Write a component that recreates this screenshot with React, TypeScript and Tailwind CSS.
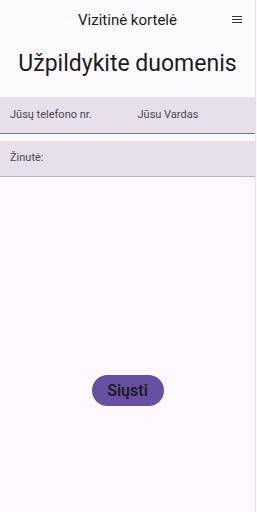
export default function App() {
  return (
    <div className="w-[257px] h-[512px] bg-[#fdf8fd] flex font-['Roboto',sans-serif]">
      <main className="w-[256px] h-full flex flex-col bg-[#fefbff] border-r border-[#e4e0e4]">
        {/* Top bar */}
        <header className="relative h-[40px] flex items-center justify-center">
          <h1 className="text-[15px] text-[#1c1b1f] leading-none">Vizitinė kortelė</h1>
          <button className="absolute right-[13px] top-[16px] flex flex-col gap-[2px]">
            <span className="block w-[10px] h-[1px] bg-[#333]" />
            <span className="block w-[10px] h-[1px] bg-[#333]" />
            <span className="block w-[10px] h-[1px] bg-[#333]" />
          </button>
        </header>

        <h2 className="mt-[10px] text-center text-[23px] text-[#1c1b1f] leading-[28px]">
          Užpildykite duomenis
        </h2>

        {/* Fields */}
        <div className="mt-[19px] flex">
          <div className="flex-1 h-[37px] bg-[#e7e0ec] border-b border-[#79747e] flex items-center pt-[1px] px-[10px] text-[11px] text-[#49454f]">
            Jūsų telefono nr.
          </div>
          <div className="flex-1 h-[37px] bg-[#e7e0ec] border-b border-[#79747e] flex items-center pt-[1px] px-[12px] text-[11px] text-[#49454f]">
            Jūsu Vardas
          </div>
        </div>
        <div className="mt-[7px] h-[36px] bg-[#e7e0ec] border-b border-[#b9b4bb] flex items-center px-[10px] text-[11px] text-[#49454f]">
          Žinutė:
        </div>

        <div className="flex-1 bg-[#fdf8fd] flex flex-col items-center pt-[198px]">
          <button className="w-[72px] h-[31px] rounded-full bg-[#6750a4] text-[16px] font-semibold text-[#1c1b1f]">
            Siųsti
          </button>
        </div>
      </main>
    </div>
  )
}
